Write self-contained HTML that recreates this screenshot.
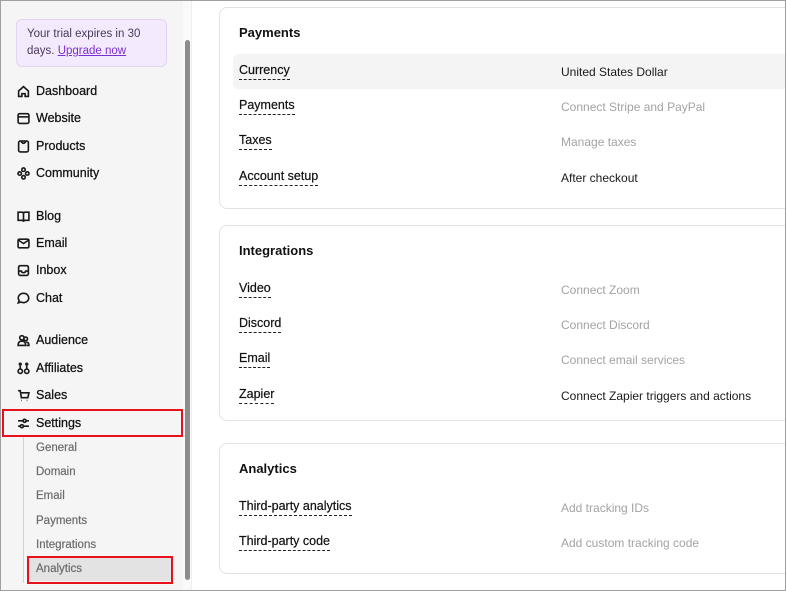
<!DOCTYPE html><html><head><style>
*{box-sizing:border-box;margin:0;padding:0}
body{width:786px;height:591px;overflow:hidden;font-family:"Liberation Sans",sans-serif;background:#fff;position:relative}
.frame{position:absolute;inset:0;border:1px solid #a0a0a0;z-index:10;pointer-events:none}
.side{position:absolute;left:0;top:0;width:183px;height:591px;background:#f5f5f5}
.sb{position:absolute;left:183px;top:0;width:9px;height:591px;background:#fafafa;border-right:1px solid #eee}
.thumb{position:absolute;left:185px;top:40px;width:5px;height:540px;background:#8c8c8c;border-radius:3px}
.trial{position:absolute;left:16px;top:19px;width:151px;height:48px;background:#f4eafd;border:1px solid #e4d4f4;border-radius:6px;padding:6px 10px;font-size:11.5px;line-height:17px;color:#4a3a5a}
.trial a{color:#7b2fd0;text-decoration:underline}
.nav{position:absolute;left:17px;font-size:12.5px;color:#111;display:flex;align-items:center;height:16px;-webkit-text-stroke:0.25px #111}
.nav svg{width:13px;height:13px;margin-right:6px;fill:none;stroke:#1a1a1a;stroke-width:1.5}
.sub{position:absolute;left:36px;font-size:11.5px;color:#6b6b6b;-webkit-text-stroke:0.2px #6b6b6b}
.vline{position:absolute;left:23px;top:437px;width:1px;height:146px;background:#d4d4d4}
.red{position:absolute;border:2px solid #e8101a}
.card{position:absolute;left:219px;width:600px;border:1px solid #e2e2e2;border-radius:8px;background:#fff}
.card h3{position:absolute;left:19px;font-size:13px;font-weight:bold;color:#111}
.row{position:absolute;left:13px;right:0;height:35px;font-size:12px}
.row .l{position:absolute;left:6px;top:9px;color:#111;border-bottom:1px dashed #222;line-height:14px;padding-bottom:2px;font-size:12.5px;-webkit-text-stroke:0.2px #111}
.row .v{position:absolute;left:328px;top:11px;color:#1a1a1a}
.row .g{color:#a3a3a3}
</style></head><body>
<div class="side"></div>
<div class="sb"></div><div class="thumb"></div>
<div class="trial">Your trial expires in 30 days. <a>Upgrade now</a></div>

<div class="nav" style="top:83px"><svg viewBox="0 0 12 12"><path d="M1.5 5.5L6 1.5l4.5 4v5h-3V8h-3v2.5h-3z"/></svg>Dashboard</div>
<div class="nav" style="top:110px"><svg viewBox="0 0 12 12"><rect x="1" y="1.5" width="10" height="9" rx="1.5"/><path d="M1 4.5h10"/></svg>Website</div>
<div class="nav" style="top:138px"><svg viewBox="0 0 12 12"><rect x="1.5" y="1" width="9" height="10" rx="1.5"/><path d="M4 1.5q2 3 4 0"/></svg>Products</div>
<div class="nav" style="top:165px"><svg viewBox="0 0 12 12"><circle cx="6" cy="2.5" r="1.6"/><circle cx="6" cy="9.5" r="1.6"/><circle cx="2.5" cy="6" r="1.6"/><circle cx="9.5" cy="6" r="1.6"/></svg>Community</div>
<div class="nav" style="top:208px"><svg viewBox="0 0 12 12"><path d="M1 2h3.5Q6 2 6 3.5V11Q6 9.5 4.5 9.5H1zM11 2H7.5Q6 2 6 3.5V11q0-1.5 1.5-1.5H11z"/></svg>Blog</div>
<div class="nav" style="top:235px"><svg viewBox="0 0 12 12"><rect x="1" y="2" width="10" height="8" rx="1.2"/><path d="M1.5 3l4.5 3 4.5-3"/></svg>Email</div>
<div class="nav" style="top:262px"><svg viewBox="0 0 12 12"><rect x="1.5" y="1.5" width="9" height="9" rx="1.5"/><path d="M1.5 6.5h2.5q0 1.5 2 1.5t2-1.5h2.5"/></svg>Inbox</div>
<div class="nav" style="top:290px"><svg viewBox="0 0 12 12"><path d="M6 1.2a4.8 4.3 0 1 1-2.4 8l-2.4.8.8-2.1A4.8 4.3 0 0 1 6 1.2z"/></svg>Chat</div>
<div class="nav" style="top:332px"><svg viewBox="0 0 12 12"><circle cx="4.5" cy="3.5" r="2"/><circle cx="8" cy="4.5" r="1.7"/><path d="M1 10.5q0-4 3.5-4t3.5 4zM8.5 7.5q2.5 0 2.5 3H9"/></svg>Audience</div>
<div class="nav" style="top:360px"><svg viewBox="0 0 12 12"><circle cx="3" cy="8.5" r="2"/><circle cx="9" cy="8.5" r="2"/><circle cx="3" cy="2" r=".8"/><circle cx="9" cy="2" r=".8"/><path d="M3 3.5v3M9 3.5v3"/></svg>Affiliates</div>
<div class="nav" style="top:387px"><svg viewBox="0 0 12 12"><path d="M1 1.5h2l1 6.5h6l1-4.5H3.5M4 10.5h.5M9 10.5h.5"/></svg>Sales</div>
<div class="nav" style="top:415px"><svg viewBox="0 0 12 12"><path d="M1 3.5h4.5M8.5 3.5H11M1 8.5h2M6 8.5h5"/><circle cx="7" cy="3.5" r="1.4"/><circle cx="4.5" cy="8.5" r="1.4"/></svg>Settings</div>
<div class="red" style="left:2px;top:409px;width:181px;height:28px"></div>
<div class="vline"></div>
<div class="sub" style="top:442px">General</div>
<div class="sub" style="top:466px">Domain</div>
<div class="sub" style="top:490px">Email</div>
<div class="sub" style="top:515px">Payments</div>
<div class="sub" style="top:539px">Integrations</div>
<div style="position:absolute;left:28px;top:557px;width:143px;height:24px;background:#e3e3e3"></div>
<div class="sub" style="top:563px">Analytics</div>
<div class="red" style="left:27px;top:556px;width:146px;height:28px"></div>

<div class="card" style="top:7px;height:202px">
<h3 style="top:17px">Payments</h3>
<div class="row" style="top:46px;background:#f4f4f4;border-radius:6px"><span class="l">Currency</span><span class="v">United States Dollar</span></div>
<div class="row" style="top:81px"><span class="l">Payments</span><span class="v g">Connect Stripe and PayPal</span></div>
<div class="row" style="top:116px"><span class="l">Taxes</span><span class="v g">Manage taxes</span></div>
<div class="row" style="top:152px"><span class="l">Account setup</span><span class="v">After checkout</span></div>
</div>
<div class="card" style="top:225px;height:196px">
<h3 style="top:17px">Integrations</h3>
<div class="row" style="top:46px"><span class="l">Video</span><span class="v g">Connect Zoom</span></div>
<div class="row" style="top:81px"><span class="l">Discord</span><span class="v g">Connect Discord</span></div>
<div class="row" style="top:116px"><span class="l">Email</span><span class="v g">Connect email services</span></div>
<div class="row" style="top:152px"><span class="l">Zapier</span><span class="v">Connect Zapier triggers and actions</span></div>
</div>
<div class="card" style="top:443px;height:131px">
<h3 style="top:17px">Analytics</h3>
<div class="row" style="top:46px"><span class="l">Third-party analytics</span><span class="v g">Add tracking IDs</span></div>
<div class="row" style="top:81px"><span class="l">Third-party code</span><span class="v g">Add custom tracking code</span></div>
</div>
<div class="frame"></div>
</body></html>
